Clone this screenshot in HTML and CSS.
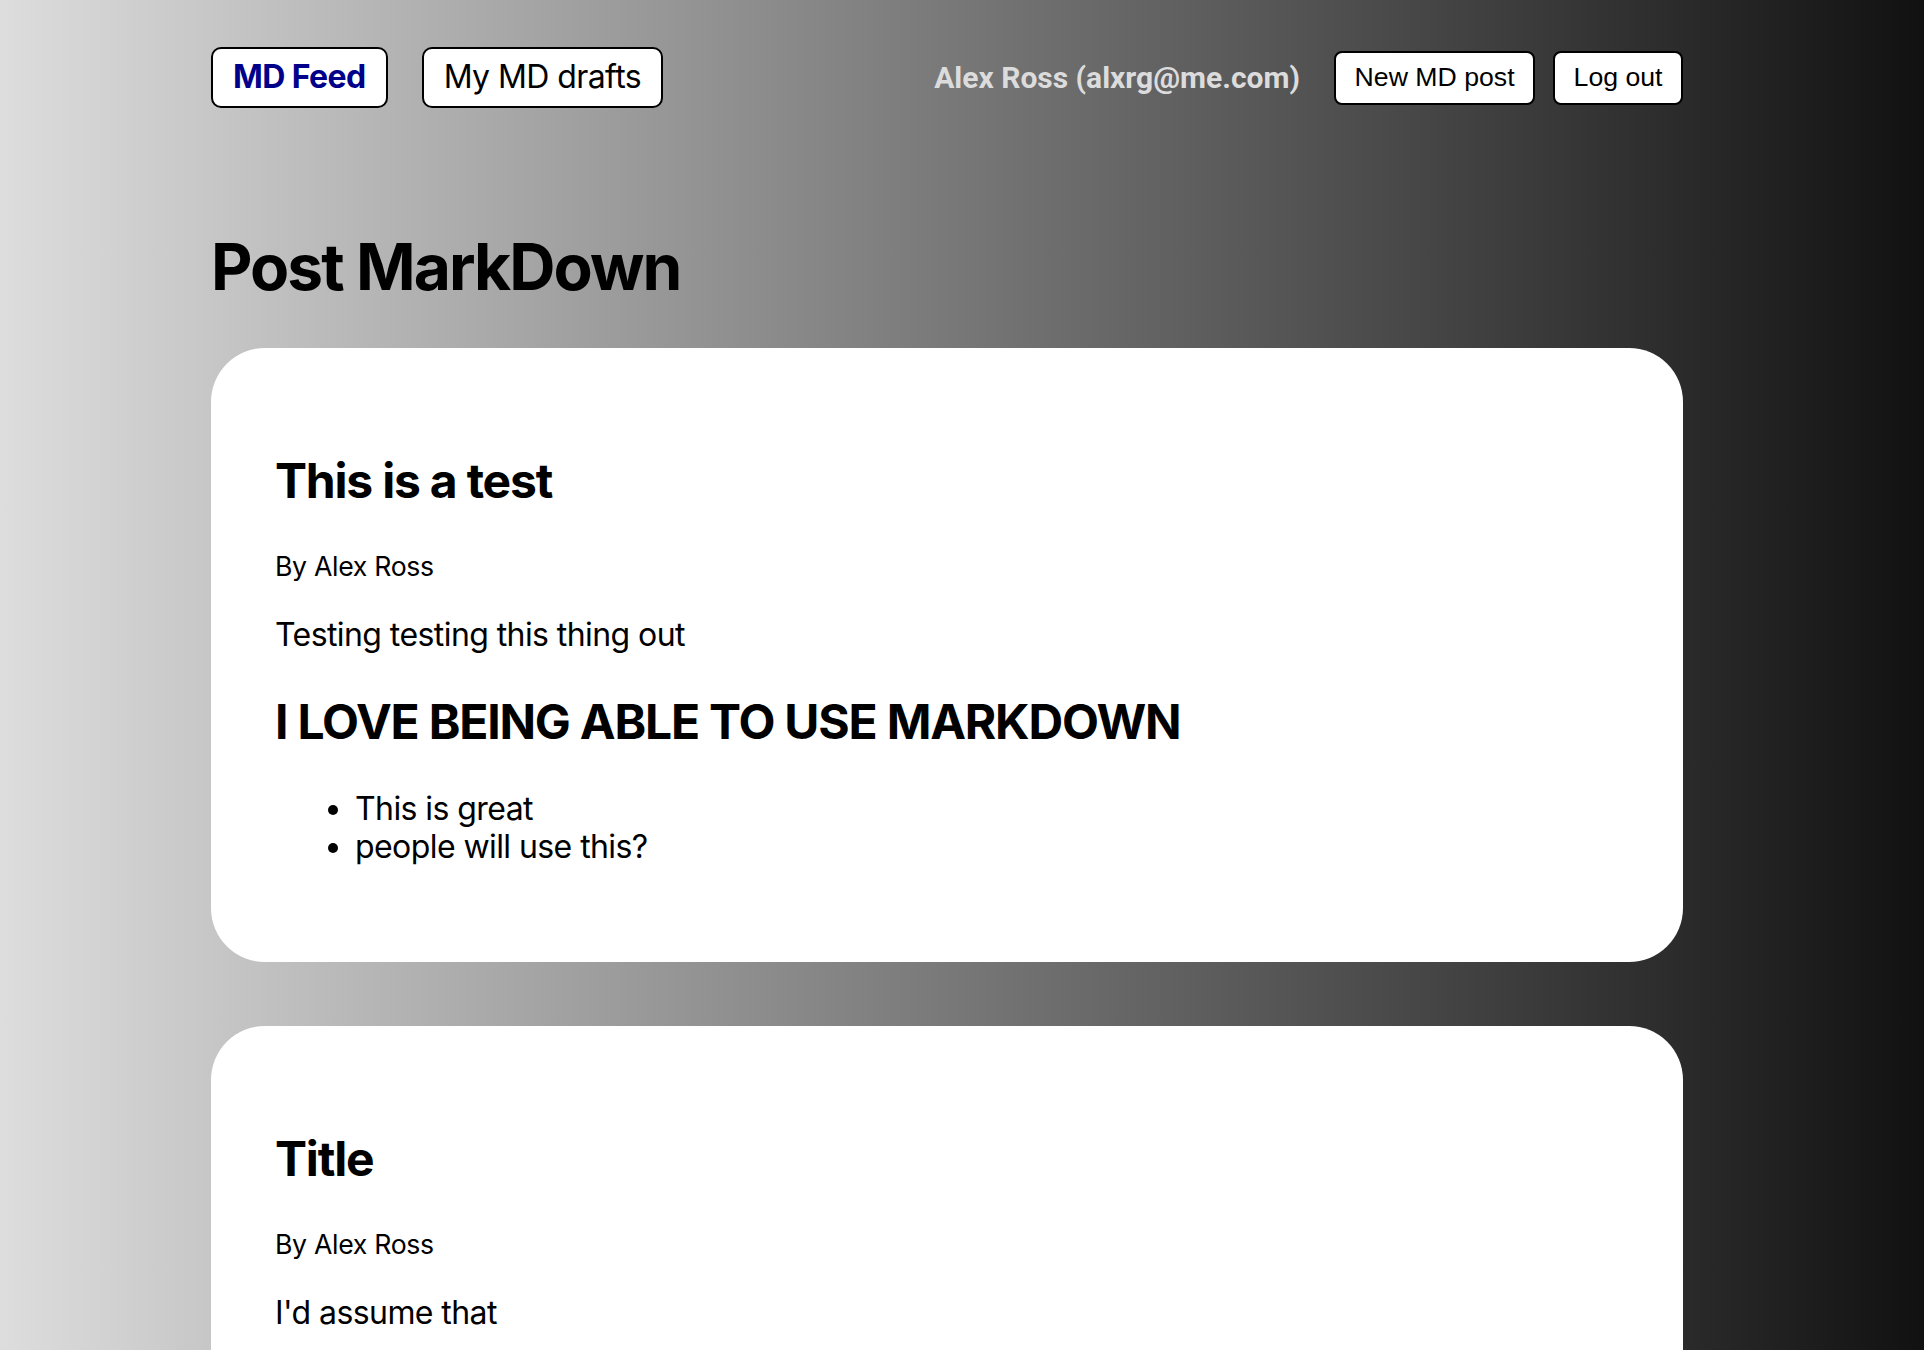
FILE: index.html
```html
<!DOCTYPE html>
<html lang="en">
<head>
<meta charset="utf-8">
<title>MD Feed</title>
<link rel="stylesheet" href="styles.css">
</head>
<body>
<div class="layout">
  <nav class="nav">
    <div class="nav-left">
      <a class="nav-link nav-link--active" href="#">MD Feed</a>
      <a class="nav-link" href="#">My MD drafts</a>
    </div>
    <div class="nav-right">
      <p class="user">Alex Ross (alxrg@me.com)</p>
      <button class="btn" type="button">New MD post</button>
      <button class="btn" type="button">Log out</button>
    </div>
  </nav>
  <main>
    <h1 class="page-title">Post MarkDown</h1>
    <div class="feed">
      <div class="post">
        <h2 class="post-title">This is a test</h2>
        <small class="post-author">By Alex Ross</small>
        <div class="post-body">
          <p>Testing testing this thing out</p>
          <h1 class="md-h1">I LOVE BEING ABLE TO USE MARKDOWN</h1>
          <ul>
            <li>This is great</li>
            <li>people will use this?</li>
          </ul>
        </div>
      </div>
      <div class="post">
        <h2 class="post-title">Title</h2>
        <small class="post-author">By Alex Ross</small>
        <div class="post-body">
          <p>I'd assume that</p>
        </div>
      </div>
    </div>
  </main>
</div>
</body>
</html>
```

FILE: styles.css
```css
html {
  min-height: 100%;
  background: linear-gradient(to right, #dddddd, #111111);
}

body {
  margin: 0;
  font-family: Inter, "Noto Sans", sans-serif;
  font-size: 32px;
  line-height: 1.19;
  letter-spacing: -0.018em;
  color: #000;
}

.layout {
  width: 1472px;
  margin-left: 211px;
}

.nav {
  display: flex;
  align-items: center;
  padding: 47px 0 78px;
}

.nav-left {
  display: flex;
  align-items: center;
  gap: 34px;
}

.nav-link {
  display: inline-flex;
  align-items: center;
  justify-content: center;
  box-sizing: border-box;
  height: 61px;
  padding: 0 20px;
  border: 2px solid #000;
  border-radius: 10px;
  background: #fff;
  color: #000;
  text-decoration: none;
  font-size: 32px;
}

.nav-link--active {
  color: #00008b;
  font-weight: 700;
}

.nav-right {
  margin-left: auto;
  display: flex;
  align-items: center;
  gap: 18px;
}

.user {
  margin: 0 16px 0 0;
  font-family: Roboto, "Liberation Sans", sans-serif;
  font-weight: 700;
  font-size: 30px;
  letter-spacing: 0;
  color: #dcdcdc;
}

.btn {
  box-sizing: border-box;
  height: 54px;
  padding: 0 18.5px;
  border: 2px solid #000;
  border-radius: 8px;
  background: #fff;
  color: #000;
  font-family: "Liberation Sans", Arial, sans-serif;
  font-size: 26.67px;
  letter-spacing: 0;
  cursor: pointer;
}

.page-title {
  margin: 43px 0;
  font-size: 64px;
  font-weight: 700;
  letter-spacing: -0.03em;
}

.post {
  background: #fff;
  border-radius: 54px;
  padding: 64px;
}

.post + .post {
  margin-top: 64px;
}

.post-title {
  margin: 40px 0 37px;
  font-size: 48px;
  font-weight: 700;
  letter-spacing: -0.025em;
}

.post-author {
  font-size: 26.67px;
  letter-spacing: -0.012em;
}

.post-body p {
  margin: 32px 0;
}

.md-h1 {
  margin: 40px 0;
  font-size: 48px;
  line-height: 1.15;
  font-weight: 700;
  letter-spacing: -0.025em;
}

.post-body ul {
  margin: 32px 0;
  padding-left: 80px;
}
```
